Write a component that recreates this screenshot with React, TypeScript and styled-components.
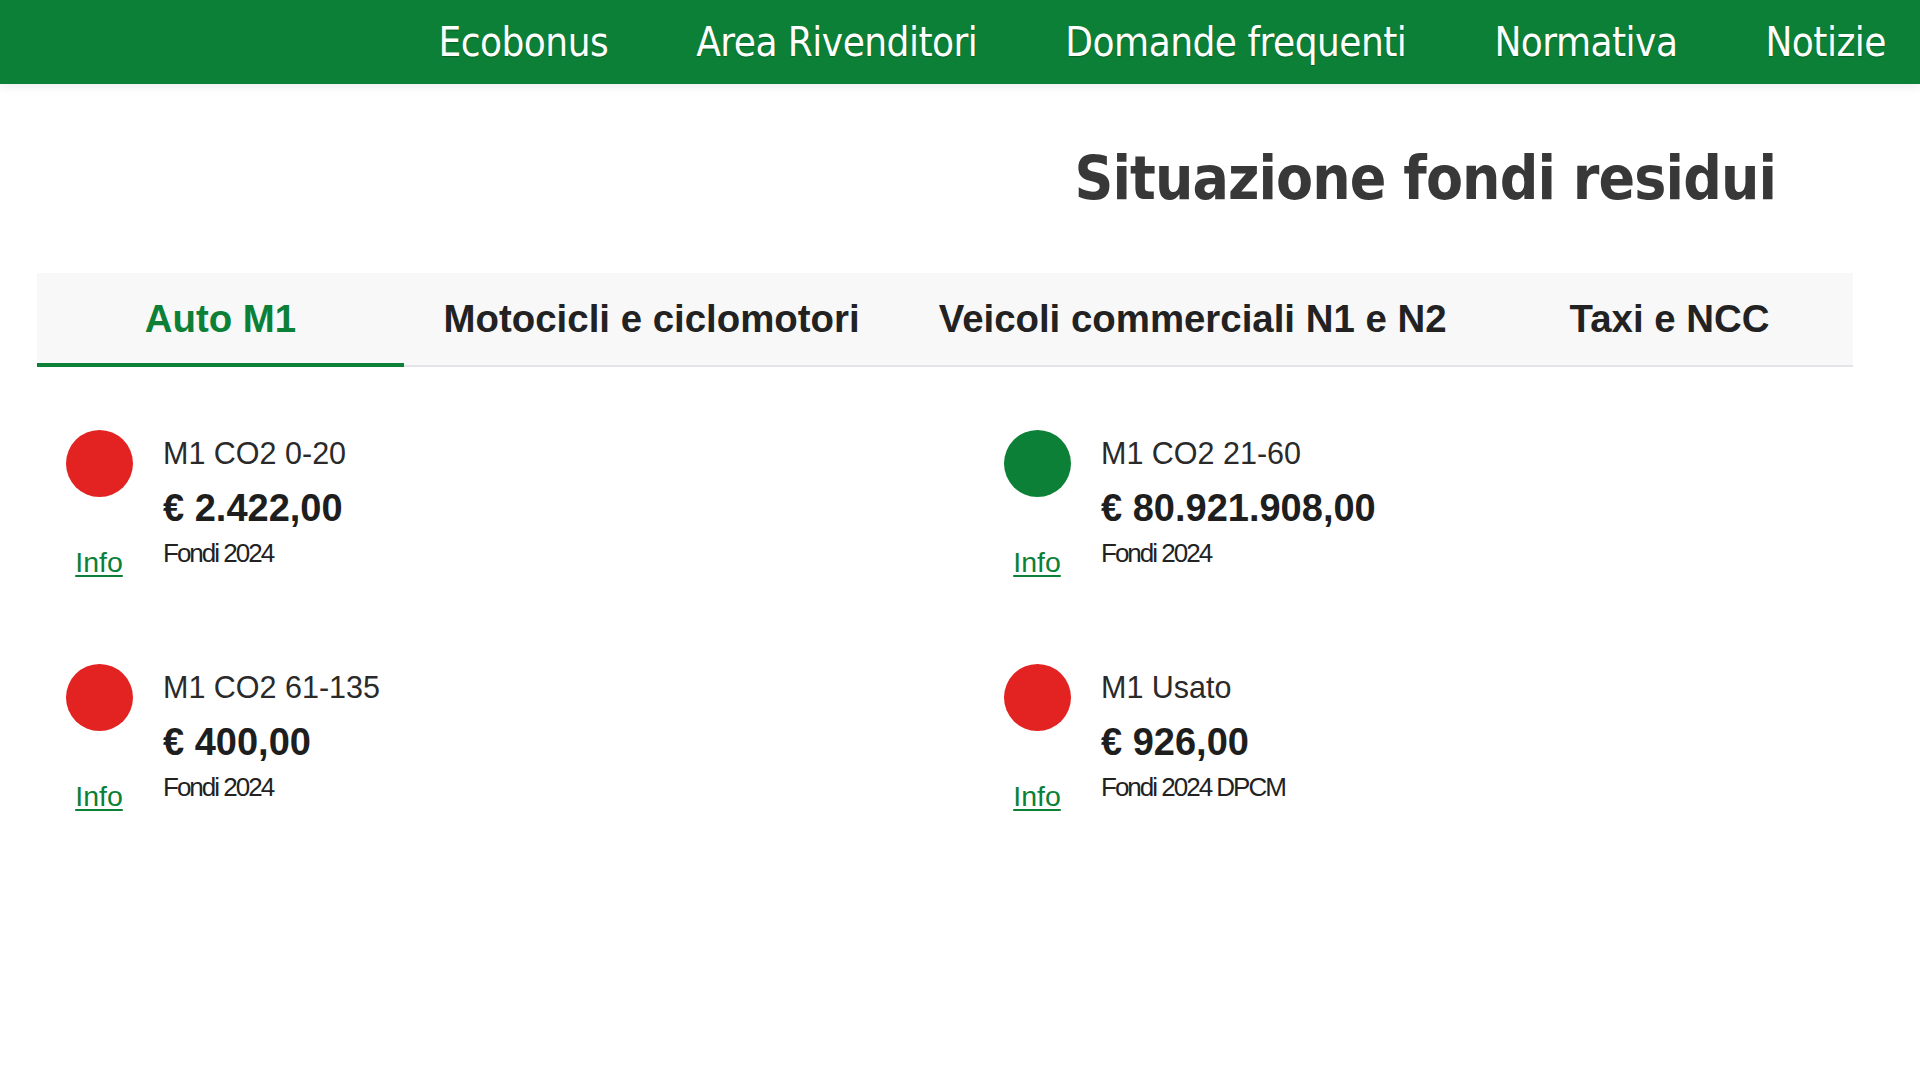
import React from "react";
import styled, { createGlobalStyle } from "styled-components";

const GREEN = "#0b8036";
const RED = "#e32222";

const Global = createGlobalStyle`
  html, body { margin: 0; padding: 0; background: #ffffff; }
  body { font-family: "Liberation Sans", Arial, sans-serif; color: #222; }
  * { box-sizing: border-box; }
`;

const NavBar = styled.header`
  height: 84px;
  background: ${GREEN};
  display: flex;
  justify-content: flex-end;
  align-items: center;
  gap: 88px;
  padding-right: 34px;
  box-shadow: 0 3px 10px rgba(0, 0, 0, 0.07);
  position: relative;
`;

const NavLink = styled.a`
  font-family: "DejaVu Sans Condensed", "DejaVu Sans", sans-serif;
  font-stretch: condensed;
  font-size: 40px;
  line-height: 84px;
  color: #ffffff;
  text-decoration: none;
  letter-spacing: -0.5px;
  text-shadow: 0 1px 1px rgba(0, 0, 0, 0.25);
`;

const Main = styled.main`
  padding: 0 67px 0 37px;
`;

const Title = styled.h1`
  margin: 58px 77px 0 0;
  font-family: "DejaVu Sans Condensed", "DejaVu Sans", sans-serif;
  font-stretch: condensed;
  font-weight: 700;
  font-size: 60px;
  line-height: 72px;
  color: #383838;
  text-align: right;
  letter-spacing: -0.9px;
`;

const TabBar = styled.nav`
  margin-top: 59px;
  display: flex;
  background: #f8f8f9;
  box-shadow: inset 0 -2px 0 #e4e4e8;
`;

const Tab = styled.div<{ $active?: boolean }>`
  min-width: 367px;
  height: 94px;
  padding: 0 40px 3px;
  display: flex;
  align-items: center;
  justify-content: center;
  font-weight: 700;
  font-size: 38.4px;
  white-space: nowrap;
  color: ${(p) => (p.$active ? GREEN : "#222")};
  box-shadow: ${(p) => (p.$active ? `inset 0 -4px 0 ${GREEN}` : "none")};
`;

const Grid = styled.section`
  margin-top: 63px;
  padding: 0 28px;
  display: grid;
  grid-template-columns: 1fr 1fr;
  column-gap: 116px;
  row-gap: 87px;
`;

const Card = styled.div`
  display: flex;
  gap: 30px;
`;

const Side = styled.div`
  width: 68px;
  display: flex;
  flex-direction: column;
  align-items: center;
`;

const Dot = styled.div<{ $color: string }>`
  width: 67px;
  height: 67px;
  border-radius: 50%;
  background: ${(p) => p.$color};
`;

const InfoLink = styled.a`
  margin-top: 50px;
  font-size: 28.5px;
  line-height: 30px;
  color: ${GREEN};
  text-decoration: underline;
  text-underline-offset: 3px;
  text-decoration-thickness: 2px;
`;

const Body = styled.div`
  padding-top: 5px;
  display: flex;
  flex-direction: column;
`;

const Name = styled.div`
  font-size: 30.5px;
  line-height: 36px;
  color: #2a2a2a;
`;

const Amount = styled.div`
  margin-top: 9px;
  font-size: 38px;
  line-height: 56px;
  font-weight: 700;
  color: #1e1e1e;
`;

const Fund = styled.div`
  margin-top: 2px;
  font-size: 26px;
  line-height: 30px;
  letter-spacing: -2px;
  color: #222;
`;

type Item = { name: string; amount: string; fund: string; color: string };

const items: Item[] = [
  { name: "M1 CO2 0-20", amount: "€ 2.422,00", fund: "Fondi 2024", color: RED },
  { name: "M1 CO2 21-60", amount: "€ 80.921.908,00", fund: "Fondi 2024", color: GREEN },
  { name: "M1 CO2 61-135", amount: "€ 400,00", fund: "Fondi 2024", color: RED },
  { name: "M1 Usato", amount: "€ 926,00", fund: "Fondi 2024 DPCM", color: RED },
];

const navItems = ["Ecobonus", "Area Rivenditori", "Domande frequenti", "Normativa", "Notizie"];
const tabs = ["Auto M1", "Motocicli e ciclomotori", "Veicoli commerciali N1 e N2", "Taxi e NCC"];

export default function App() {
  return (
    <>
      <Global />
      <NavBar>
        {navItems.map((n) => (
          <NavLink key={n} href="#">
            {n}
          </NavLink>
        ))}
      </NavBar>
      <Main>
        <Title>Situazione fondi residui</Title>
        <TabBar>
          {tabs.map((t, i) => (
            <Tab key={t} $active={i === 0}>
              {t}
            </Tab>
          ))}
        </TabBar>
        <Grid>
          {items.map((it) => (
            <Card key={it.name}>
              <Side>
                <Dot $color={it.color} />
                <InfoLink href="#">Info</InfoLink>
              </Side>
              <Body>
                <Name>{it.name}</Name>
                <Amount>{it.amount}</Amount>
                <Fund>{it.fund}</Fund>
              </Body>
            </Card>
          ))}
        </Grid>
      </Main>
    </>
  );
}
